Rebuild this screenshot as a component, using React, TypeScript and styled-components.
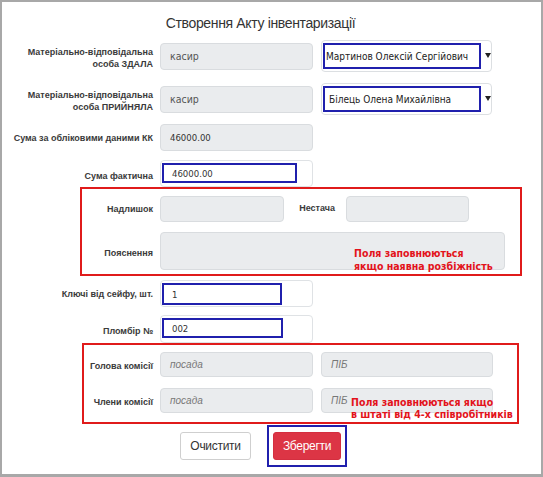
import React from "react";
import styled, { createGlobalStyle, css } from "styled-components";

const GlobalStyle = createGlobalStyle`
  html, body { margin: 0; padding: 0; background: #ffffff; }
  * { box-sizing: border-box; }
`;

const Frame = styled.div`
  width: 543px;
  height: 477px;
  border: 2px solid #a8a8a8;
  border-bottom-width: 3px;
  background: #ffffff;
  font-family: "Liberation Sans", Arial, sans-serif;
  color: #333;
  display: flex;
  flex-direction: column;
  overflow: hidden;
`;

const Title = styled.div`
  padding-top: 11px;
  padding-right: 22px;
  height: 31px;
  line-height: 20px;
  font-size: 14px;
  letter-spacing: -0.35px;
  text-align: center;
  color: #333;
`;

const Row = styled.div<{ $mt: number; $h: number; $align?: string }>`
  display: flex;
  align-items: ${(p) => p.$align || "center"};
  margin-top: ${(p) => p.$mt}px;
  height: ${(p) => p.$h}px;
  flex-shrink: 0;
`;

const Label = styled.div<{ $w: number; $gap?: number; $ml?: number; $dy?: number }>`
  width: ${(p) => p.$w}px;
  margin-left: ${(p) => p.$ml || 0}px;
  margin-right: ${(p) => (p.$gap === undefined ? 7 : p.$gap)}px;
  flex-shrink: 0;
  text-align: right;
  font-size: 9px;
  font-weight: 700;
  line-height: 12px;
  color: #3a3a3a;
  position: relative;
  top: ${(p) => p.$dy || 0}px;
`;

const GrayBox = styled.div<{ $w: number; $h: number; $ml?: number }>`
  width: ${(p) => p.$w}px;
  height: ${(p) => p.$h}px;
  margin-left: ${(p) => p.$ml || 0}px;
  flex-shrink: 0;
  background: #eaecee;
  border: 1px solid #d9dcdf;
  border-radius: 4px;
  display: flex;
  align-items: center;
  padding-left: 9px;
`;

const PlainValue = styled.span`
  font-family: "DejaVu Sans Condensed", "DejaVu Sans", sans-serif;
  font-size: 10.5px;
  color: #555;
`;

const NumValue = styled.span`
  font-family: "DejaVu Sans Condensed", "DejaVu Sans", sans-serif;
  font-size: 9.5px;
  color: #333;
`;

const Placeholder = styled.span`
  font-family: "Liberation Sans", Arial, sans-serif;
  font-style: italic;
  font-size: 10px;
  color: #777;
`;

const SelectBox = styled.div`
  width: 171px;
  height: 32px;
  margin-left: 8px;
  flex-shrink: 0;
  background: #fff;
  border: 1px solid #dcdfe2;
  border-radius: 4px;
  padding: 2px 0 0 1px;
  display: flex;
  align-items: flex-start;
`;

const Highlight = styled.div<{ $w: number; $h: number }>`
  width: ${(p) => p.$w}px;
  height: ${(p) => p.$h}px;
  border: 2px solid #2020ad;
  display: flex;
  align-items: center;
  padding-left: ${(p) => (p.$w > 140 ? 1 : 8)}px;
  flex-shrink: 0;
`;

const SelectText = styled.span<{ $pad?: number }>`
  font-family: "DejaVu Sans Condensed", "DejaVu Sans", sans-serif;
  font-size: 10px;
  color: #222;
  white-space: nowrap;
  padding-left: ${(p) => p.$pad || 0}px;
`;

const Caret = styled.span`
  margin: 10px 0 0 4px;
  width: 0;
  height: 0;
  border-left: 3px solid transparent;
  border-right: 3px solid transparent;
  border-top: 5px solid #222;
`;

const WhiteField = styled.div<{ $h: number }>`
  width: 153px;
  height: ${(p) => p.$h}px;
  flex-shrink: 0;
  background: #fff;
  border: 1px solid #dfe2e5;
  border-radius: 4px;
  padding: 2px 0 0 1px;
`;

const NoteBox = styled.div<{ $ml: number; $w: number; $pt: number; $pb: number; $gap: number; $mt: number }>`
  position: relative;
  flex-shrink: 0;
  margin-left: ${(p) => p.$ml}px;
  margin-top: ${(p) => p.$mt}px;
  width: ${(p) => p.$w}px;
  border: 2px solid #e01b1b;
  padding: ${(p) => p.$pt}px 0 ${(p) => p.$pb}px 0;
  display: flex;
  flex-direction: column;
  gap: ${(p) => p.$gap}px;
`;

const NoteRow = styled.div<{ $h: number }>`
  display: flex;
  align-items: center;
  height: ${(p) => p.$h}px;
`;

const NoteText = styled.div<{ $left: number; $top: number; $lh: number }>`
  position: absolute;
  left: ${(p) => p.$left}px;
  top: ${(p) => p.$top}px;
  font-family: "DejaVu Sans Condensed", "DejaVu Sans", sans-serif;
  font-weight: 700;
  font-size: 10.5px;
  line-height: ${(p) => p.$lh}px;
  color: #e3131b;
  white-space: nowrap;
`;

const ButtonRow = styled.div`
  display: flex;
  align-items: center;
  margin-top: 1px;
  padding-left: 178px;
  gap: 16px;
  height: 42px;
  flex-shrink: 0;
`;

const buttonBase = css`
  height: 28px;
  border-radius: 3px;
  font-family: "Liberation Sans", Arial, sans-serif;
  font-size: 12px;
  letter-spacing: -0.3px;
  display: flex;
  align-items: center;
  justify-content: center;
  cursor: pointer;
`;

const ClearButton = styled.button`
  ${buttonBase};
  width: 71px;
  background: #fff;
  border: 1px solid #cfcfcf;
  color: #333;
`;

const SaveFrame = styled.div`
  border: 2px solid #2020ad;
  padding: 5px 4px;
`;

const SaveButton = styled.button`
  ${buttonBase};
  width: 68px;
  background: #dc3545;
  border: 1px solid #d42f40;
  color: #fff;
`;

export default function App() {
  return (
    <>
      <GlobalStyle />
      <Frame>
        <Title>Створення Акту інвентаризації</Title>

        <Row $mt={7} $h={32}>
          <Label $w={151} $dy={2}>
            Матеріально-відповідальна
            <br />
            особа ЗДАЛА
          </Label>
          <GrayBox $w={153} $h={27}>
            <PlainValue>касир</PlainValue>
          </GrayBox>
          <SelectBox>
            <Highlight $w={158} $h={26}>
              <SelectText>Мартинов Олексій Сергійович</SelectText>
            </Highlight>
            <Caret />
          </SelectBox>
        </Row>

        <Row $mt={11} $h={32}>
          <Label $w={151} $dy={2}>
            Матеріально-відповідальна
            <br />
            особа ПРИЙНЯЛА
          </Label>
          <GrayBox $w={153} $h={27}>
            <PlainValue>касир</PlainValue>
          </GrayBox>
          <SelectBox>
            <Highlight $w={158} $h={26}>
              <SelectText $pad={3}>Білець Олена Михайлівна</SelectText>
            </Highlight>
            <Caret />
          </SelectBox>
        </Row>

        <Row $mt={9} $h={27}>
          <Label $w={151}>Сума за обліковими даними КК</Label>
          <GrayBox $w={153} $h={27}>
            <NumValue>46000.00</NumValue>
          </GrayBox>
        </Row>

        <Row $mt={9} $h={27}>
          <Label $w={151} $dy={2}>Сума фактична</Label>
          <WhiteField $h={27}>
            <Highlight $w={135} $h={20}>
              <NumValue>46000.00</NumValue>
            </Highlight>
          </WhiteField>
        </Row>

        <NoteBox $ml={78} $mt={0} $w={442} $pt={7} $pb={4} $gap={10}>
          <NoteRow $h={26}>
            <Label $w={71}>Надлишок</Label>
            <GrayBox $w={124} $h={26} />
            <Label $w={37} $ml={14} $gap={11} $dy={-1}>
              Нестача
            </Label>
            <GrayBox $w={123} $h={26} />
          </NoteRow>
          <NoteRow $h={38}>
            <Label $w={71} $dy={2}>Пояснення</Label>
            <GrayBox $w={345} $h={38} />
          </NoteRow>
          <NoteText $left={272} $top={58} $lh={13}>
            Поля заповнюються
            <br />
            якщо наявна розбіжність
          </NoteText>
        </NoteBox>

        <Row $mt={4} $h={27}>
          <Label $w={151}>Ключі від сейфу, шт.</Label>
          <WhiteField $h={27}>
            <Highlight $w={120} $h={22}>
              <NumValue>1</NumValue>
            </Highlight>
          </WhiteField>
        </Row>

        <Row $mt={9} $h={26}>
          <Label $w={151} $dy={2}>Пломбір №</Label>
          <WhiteField $h={28}>
            <Highlight $w={121} $h={20}>
              <NumValue>002</NumValue>
            </Highlight>
          </WhiteField>
        </Row>

        <NoteBox $ml={80} $mt={1} $w={437} $pt={7} $pb={9} $gap={11}>
          <NoteRow $h={25}>
            <Label $w={69} $dy={1}>Голова комісії</Label>
            <GrayBox $w={153} $h={25}>
              <Placeholder>посада</Placeholder>
            </GrayBox>
            <GrayBox $w={172} $h={25} $ml={8}>
              <Placeholder>ПІБ</Placeholder>
            </GrayBox>
          </NoteRow>
          <NoteRow $h={25}>
            <Label $w={69} $dy={1}>Члени комісії</Label>
            <GrayBox $w={153} $h={25}>
              <Placeholder>посада</Placeholder>
            </GrayBox>
            <GrayBox $w={172} $h={25} $ml={8}>
              <Placeholder>ПІБ</Placeholder>
            </GrayBox>
          </NoteRow>
          <NoteText $left={267} $top={51} $lh={12}>
            Поля заповнюються якщо
            <br />в штаті від 4-х співробітників
          </NoteText>
        </NoteBox>

        <ButtonRow>
          <ClearButton type="button">Очистити</ClearButton>
          <SaveFrame>
            <SaveButton type="button">Зберегти</SaveButton>
          </SaveFrame>
        </ButtonRow>
      </Frame>
    </>
  );
}
